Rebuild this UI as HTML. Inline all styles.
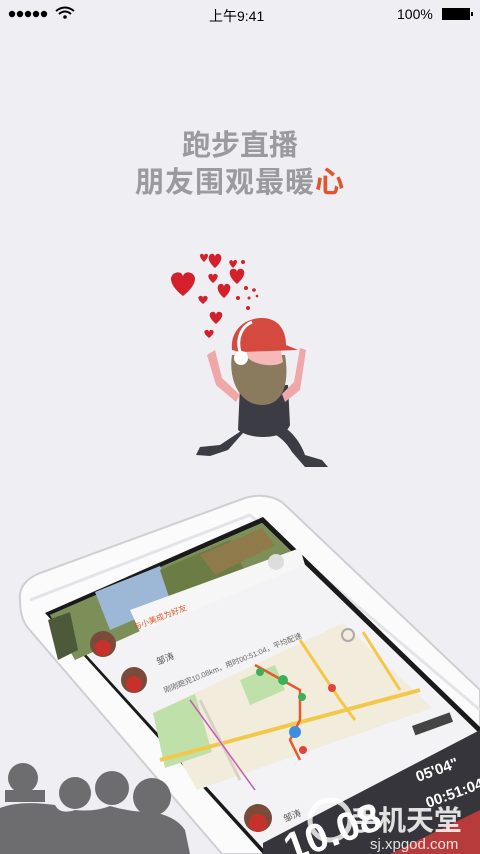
<!DOCTYPE html>
<html><head><meta charset="utf-8"><style>
html,body{margin:0;padding:0;}
body{width:480px;height:854px;overflow:hidden;background:#efeef3;position:relative;font-family:"Liberation Sans","Noto Sans CJK SC",sans-serif;}
.sb{position:absolute;top:0;left:0;width:480px;height:28px;font-size:14px;color:#000;}
.t1,.t2{position:absolute;left:0;width:480px;text-align:center;color:#9b9b9d;font-weight:bold;font-family:"Liberation Sans","Noto Sans CJK SC",sans-serif;}
.t1{top:122px;font-size:29px;}
.t2{top:159px;font-size:29px;letter-spacing:1px;}
.t2 span{color:#e2542b;}
svg{position:absolute;left:0;top:0;}
</style></head><body>
<svg width="480" height="854" viewBox="0 0 480 854">
<g fill="#000"><circle cx="12" cy="14" r="3.2"/><circle cx="20" cy="14" r="3.2"/><circle cx="28" cy="14" r="3.2"/><circle cx="36" cy="14" r="3.2"/><circle cx="44" cy="14" r="3.2"/></g>
<path d="M56 11 Q65 4 74 11" stroke="#000" stroke-width="2" fill="none"/><path d="M59 14 Q65 9 71 14" stroke="#000" stroke-width="2" fill="none"/><circle cx="65" cy="17" r="1.8"/>
<rect x="442" y="8" width="28" height="12" fill="#000"/><rect x="471" y="12" width="2" height="4" fill="#000"/>
<g fill="#d3202a">
<path d="M183 296 C170 286 168 276 175 273 C180 271 183 274 183 277 C183 274 186 271 191 273 C198 276 196 286 183 296Z"/>
<path d="M215 268 C208 262 207 256 211 254 C213 253 215 255 215 257 C215 255 217 253 219 254 C223 256 222 262 215 268Z"/>
<path d="M204 262 C200 258 199 255 201 254 C203 253 204 255 204 256 C204 255 205 253 207 254 C209 255 208 258 204 262Z"/>
<path d="M237 284 C229 277 228 271 232 269 C235 268 237 270 237 272 C237 270 239 268 242 269 C246 271 245 277 237 284Z"/>
<path d="M224 298 C217 292 216 286 220 284 C222 283 224 285 224 287 C224 285 226 283 228 284 C232 286 231 292 224 298Z"/>
<path d="M213 283 C208 279 207 275 210 274 C212 273 213 275 213 276 C213 275 214 273 216 274 C219 275 218 279 213 283Z"/>
<path d="M203 304 C198 300 197 297 200 296 C202 295 203 297 203 298 C203 297 204 295 206 296 C209 297 208 300 203 304Z"/>
<path d="M216 324 C209 318 208 313 212 312 C214 311 216 313 216 315 C216 313 218 311 220 312 C224 313 223 318 216 324Z"/>
<path d="M209 338 C204 334 203 331 206 330 C208 329 209 331 209 332 C209 331 210 329 212 330 C215 331 214 334 209 338Z"/>
<path d="M233 268 C229 264 228 261 231 260 C232 260 233 261 233 262 C233 261 234 260 236 260 C238 261 237 264 233 268Z"/>
<circle cx="243" cy="262" r="2"/><circle cx="246" cy="288" r="2"/><circle cx="254" cy="290" r="1.8"/><circle cx="249" cy="298" r="1.5"/><circle cx="238" cy="298" r="2"/><circle cx="248" cy="308" r="2"/><circle cx="257" cy="296" r="1.3"/>
</g>
<path d="M220 445 L200 447 L196 455 L210 456 L228 450 L250 425 Z" fill="#3b3c44"/>
<path d="M262 420 C285 420 300 440 305 455 L322 460 L328 467 L305 467 L292 452 C285 440 275 432 262 430Z" fill="#3b3c44"/>
<path d="M240 385 L288 385 L290 425 C285 440 250 440 238 430Z" fill="#3b3c44"/>
<path d="M215 350 L222 378 L240 395 L236 402 L216 385 L207 355Z" fill="#f0a7a8"/>
<path d="M300 348 L306 350 L300 390 L285 402 L282 394 L294 382Z" fill="#f0a7a8"/>
<path d="M232 355 C228 380 240 405 262 405 C282 405 290 385 285 355 Z" fill="#8a7a5e"/>
<path d="M245 345 L280 345 L283 362 C275 368 255 365 248 358Z" fill="#f5b9b7"/>
<path d="M232 350 C230 330 245 318 262 318 C278 318 286 330 286 345 L298 350 L240 352Z" fill="#d54a3f"/>
<path d="M240 352 C236 338 242 326 252 322" stroke="#fff" stroke-width="3" fill="none"/>
<circle cx="241" cy="358" r="7" fill="#fff"/>
<path d="M20 600 Q18 582 40 573 L245 498 Q265 492 282 502 L480 690 L480 854 L222 854 L28 628 Q20 618 20 600Z" fill="#fbfbfc" stroke="#cfcfd3" stroke-width="2"/>
<path d="M30 600 L250 515 L480 710" stroke="#e4e4e8" stroke-width="3" fill="none"/>
<path d="M45 613 L263 517 L480 727 L480 854 L263 854 Z" fill="#1a1a1a"/>
<path d="M50 615 L262 523 L478 732 L478 854 L268 854 Z" fill="#f3f3f5"/>
<path d="M50 615 L262 523 L300 560 L75 660 Z" fill="#7c8f58"/>
<path d="M95 592 L160 566 L175 602 L110 630Z" fill="#9cb8d6"/>
<path d="M160 570 L230 540 L245 572 L170 600Z" fill="#6b7d44"/>
<path d="M200 555 L262 528 L275 545 L215 575Z" fill="#8e7a4a"/>
<path d="M48 620 L70 612 L78 650 L58 660Z" fill="#4d5a3a"/>
<path d="M130 610 L300 548 L305 565 L140 632Z" fill="#f6f6f7"/>
<text x="135" y="630" font-size="8" fill="#e2542b" transform="rotate(-21 135 630)">与小美成为好友</text>
<circle cx="276" cy="562" r="8" fill="#ddd"/>
<circle cx="103" cy="644" r="13" fill="#7a4a3a"/><circle cx="103" cy="648" r="8" fill="#c8302c"/>
<circle cx="134" cy="680" r="13" fill="#7a4a3a"/><circle cx="134" cy="684" r="8" fill="#c8302c"/>
<circle cx="258" cy="818" r="14" fill="#7a4a3a"/><circle cx="258" cy="823" r="9" fill="#c8302c"/>
<text x="158" y="665" font-size="9" fill="#555" transform="rotate(-22 158 665)">邹涛</text>
<text x="165" y="693" font-size="7.5" fill="#666" transform="rotate(-22 165 693)">刚刚跑完10.08km，用时00:51:04，平均配速</text>
<text x="285" y="822" font-size="9" fill="#555" transform="rotate(-22 285 822)">邹涛</text>
<path d="M153 713 L343 623 L432 708 L197 790 Z" fill="#f2ecdc"/>
<path d="M153 713 L195 694 L212 752 L165 768Z" fill="#bfe0a8"/>
<path d="M240 680 L275 665 L285 690 L250 705Z" fill="#bfe0a8"/>
<path d="M160 760 L420 690" stroke="#f2c84b" stroke-width="4"/>
<path d="M200 700 L240 780" stroke="#d8d2c4" stroke-width="3"/>
<path d="M255 665 L300 690 L300 720 L290 740 L300 760" stroke="#e4592e" stroke-width="2.5" fill="none"/>
<path d="M300 640 L340 700 L355 720" stroke="#f2c84b" stroke-width="3" fill="none"/>
<path d="M363 632 L400 690" stroke="#f2c84b" stroke-width="3"/>
<path d="M190 700 L255 790" stroke="#c45cb4" stroke-width="1.5"/>
<circle cx="260" cy="672" r="4" fill="#3bb05a"/><circle cx="283" cy="680" r="5" fill="#3bb05a"/><circle cx="302" cy="697" r="4" fill="#3bb05a"/>
<circle cx="295" cy="732" r="6" fill="#3c8fe0"/><circle cx="303" cy="750" r="4" fill="#e0443a"/><circle cx="332" cy="688" r="4" fill="#e0443a"/>
<circle cx="348" cy="635" r="6" fill="none" stroke="#aaa" stroke-width="2"/>
<rect x="412" y="726" width="40" height="10" fill="#444" transform="rotate(-20 412 726)"/>
<path d="M263 843 L480 730 L480 854 L263 854 Z" fill="#35353b"/>
<path d="M390 854 L480 810 L480 854Z" fill="#b73b3b"/>
<text x="418" y="782" font-size="15" font-weight="bold" fill="#fff" transform="rotate(-20 418 782)">05'04"</text>
<text x="428" y="808" font-size="15" font-weight="bold" fill="#fff" transform="rotate(-20 428 808)">00:51:04</text>
<text x="290" y="862" font-size="40" font-weight="bold" fill="#fff" transform="rotate(-20 290 862)">10.08</text>
<g fill="#6d6d6f">
<circle cx="23" cy="778" r="15"/><rect x="5" y="790" width="40" height="12"/>
<circle cx="75" cy="793" r="16"/><circle cx="112" cy="788" r="17"/><circle cx="152" cy="797" r="19"/>
<path d="M0 808 Q20 800 55 805 Q60 815 75 810 Q95 812 110 806 Q130 812 150 812 Q175 815 185 830 L190 854 L0 854Z"/>
</g>
<circle cx="330" cy="820" r="20" fill="none" stroke="#fff" stroke-width="5" opacity="0.8"/>
<text x="350" y="830" font-size="28" font-weight="bold" fill="#fff" opacity="0.85">手机天堂</text>
<text x="370" y="849" font-size="15" fill="#fff" opacity="0.85">sj.xpgod.com</text>
</svg>
<div class="sb"><span style="position:absolute;left:209px;top:6px;">上午9:41</span><span style="position:absolute;left:397px;top:6px;">100%</span></div>
<div class="t1">跑步直播</div>
<div class="t2">朋友围观最暖<span>心</span></div>
</body></html>
